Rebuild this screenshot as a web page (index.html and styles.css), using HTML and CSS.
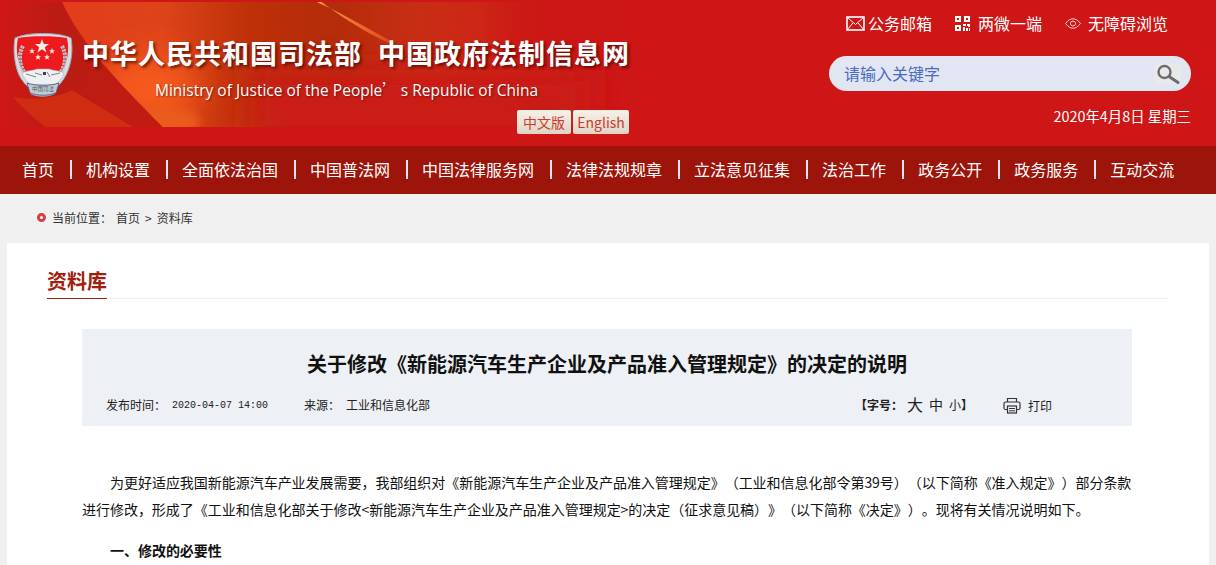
FILE: index.html
```html
<!DOCTYPE html>
<html lang="zh-CN">
<head>
<meta charset="utf-8">
<title>关于修改《新能源汽车生产企业及产品准入管理规定》的决定的说明</title>
<link rel="stylesheet" href="styles.css">
</head>
<body>
<header class="header">
  <svg class="banner" width="660" height="128" viewBox="0 0 660 128" aria-hidden="true">
    <defs>
      <linearGradient id="bgGrad" x1="0" y1="0" x2="1" y2="0">
        <stop offset="0" stop-color="#cf1716"/>
        <stop offset="0.09" stop-color="#ba1c13"/>
        <stop offset="0.25" stop-color="#c21c12"/>
        <stop offset="0.7" stop-color="#ca1714"/>
        <stop offset="1" stop-color="#ce1616"/>
      </linearGradient>
      <linearGradient id="glow" x1="0" y1="0" x2="1" y2="0">
        <stop offset="0" stop-color="#e33c1c"/>
        <stop offset="0.2" stop-color="#dd441a"/>
        <stop offset="0.38" stop-color="#bd3008"/>
        <stop offset="0.55" stop-color="#b42c0a"/>
        <stop offset="0.72" stop-color="#c82e14"/>
        <stop offset="0.84" stop-color="#cd2616"/>
        <stop offset="1" stop-color="#ca1714" stop-opacity="0"/>
      </linearGradient>
      <linearGradient id="fadeDown" x1="0" y1="0" x2="0" y2="1">
        <stop offset="0" stop-color="#ca1714" stop-opacity="0"/>
        <stop offset="1" stop-color="#ca1714"/>
      </linearGradient>
      <linearGradient id="streak" x1="0" y1="0" x2="1" y2="0">
        <stop offset="0" stop-color="#f6a63e"/>
        <stop offset="0.5" stop-color="#ea6a2c"/>
        <stop offset="1" stop-color="#d82c18"/>
      </linearGradient>
      <filter id="soft" x="-50%" y="-50%" width="200%" height="200%"><feGaussianBlur stdDeviation="16"/></filter>
      <filter id="softer" x="-50%" y="-50%" width="200%" height="200%"><feGaussianBlur stdDeviation="5"/></filter>
      <clipPath id="glowClip"><path d="M62 2C82 45 118 82 163 127H660V2Z"/></clipPath>
      <clipPath id="bannerClip"><rect x="0" y="2" width="660" height="125"/></clipPath>
    </defs>
    <rect x="0" y="2" width="660" height="125" fill="url(#bgGrad)"/>
    <g clip-path="url(#bannerClip)">
      <path d="M13 97C22 108 34 118 45 127H133C112 114 92 102 72 90C50 100 30 100 13 97Z" fill="#cf2c12"/>
      <g clip-path="url(#glowClip)">
        <rect x="62" y="0" width="498" height="128" fill="url(#glow)"/>
        <path d="M300 128H560V60C470 40 420 50 380 60C340 75 310 100 270 128Z" fill="url(#fadeDown)" filter="url(#softer)"/>
        <rect x="250" y="70" width="340" height="70" fill="#ca1a14" filter="url(#soft)"/>
        <ellipse cx="150" cy="88" rx="48" ry="34" fill="#f65a1c" filter="url(#soft)"/>
        <ellipse cx="168" cy="122" rx="32" ry="14" fill="#ea5c1c" filter="url(#softer)"/>
      </g>
      <path d="M312 0C345 14 380 36 412 52C380 42 345 20 319 0Z" fill="url(#streak)"/>
    </g>
  </svg>
  <div class="brand">
    <svg class="emblem" width="60" height="64" viewBox="0 0 60 64" aria-hidden="true">
      <path d="M29.500 .5C40 .5 50 1.500 58 5C60 16 59 30 53 42C50 48 46 52 43 55L41 61C33 64 26 64 18 61L16 55C13 52 9 48 6 42C1 30 0 16 2 5C10 1.500 20 .5 29.500 .5Z" fill="#d9dde1" stroke="#9aa6b4"/>
      <path d="M5 5C15 2.500 43 2.500 54 5C57 18 54 32 47 41L36 37H23L12 41C5 32 2 18 5 5Z" fill="#ee1a1e"/>
      <polygon points="29,6 30.800,11 36,11 31.800,14.200 33.400,19.500 29,16.300 24.600,19.500 26.200,14.200 22,11 27.200,11" fill="#f5efe8"/>
      <polygon points="19,15 19.800,17.200 22,17.200 20.300,18.600 20.900,20.800 19,19.500 17.100,20.800 17.700,18.600 16,17.200 18.200,17.200" fill="#f5efe8"/>
      <polygon points="39,15 39.800,17.200 42,17.200 40.300,18.600 40.900,20.800 39,19.500 37.100,20.800 37.700,18.600 36,17.200 38.200,17.200" fill="#f5efe8"/>
      <polygon points="25,21 25.800,23.200 28,23.200 26.300,24.600 26.900,26.800 25,25.500 23.100,26.800 23.700,24.600 22,23.200 24.200,23.200" fill="#f5efe8"/>
      <polygon points="34,21 34.800,23.200 37,23.200 35.300,24.600 35.900,26.800 34,25.500 32.100,26.800 32.700,24.600 31,23.200 33.200,23.200" fill="#f5efe8"/>
      <path d="M10 13C5 22 6 34 14 43" fill="none" stroke="#c3c9cf" stroke-width="4" stroke-dasharray="2.500 1"/>
      <path d="M49 13C54 22 53 34 45 43" fill="none" stroke="#c3c9cf" stroke-width="4" stroke-dasharray="2.500 1"/>
      <path d="M10 13C5 22 6 34 14 43M49 13C54 22 53 34 45 43" fill="none" stroke="#8b959f" stroke-width=".8"/>
      <path d="M9 40C14 37 20 38 24 36L36 36C40 38 46 37 51 40C49 46 45 50 41 52H19C15 50 11 46 9 40Z" fill="#eef0f2" stroke="#a8b0b8" stroke-width=".6"/>
      <path d="M13 41L23 44M22 40L29 42M34 39L37 44M38 42L47 40" stroke="#7c8690" stroke-width="1"/>
      <rect x="30" y="39" width="3" height="3" fill="#3c4450"/>
      <path d="M14 50C22 53 38 53 46 50L43 60C34 63 26 63 17 60Z" fill="#c3cad2" stroke="#4b5f86" stroke-width=".9"/>
      <text class="emblem-text" x="30" y="58" text-anchor="middle">中国司法</text>
    </svg>
    <div class="brand-text">
      <h1 class="site-title"><span>中华人民共和国司法部</span><span>中国政府法制信息网</span></h1>
      <p class="site-en">Ministry of Justice of the People<span class="wide-quote">’</span> s Republic of China</p>
      <div class="lang">
        <a class="lang-btn">中文版</a>
        <a class="lang-btn lang-en">English</a>
      </div>
    </div>
  </div>
  <div class="tools">
    <div class="tool-links">
      <a class="tool">
        <svg width="19" height="15" viewBox="0 0 19 15" aria-hidden="true"><rect x="1" y="1" width="17" height="13" fill="none" stroke="#fff" stroke-width="1.600"/><path d="M1.500 1.500L9.500 8.500L17.500 1.500M1.500 13.500L7 6.800M17.500 13.500L12 6.800" fill="none" stroke="#fff" stroke-width="1"/></svg>
        <span>公务邮箱</span>
      </a>
      <a class="tool tool-qr">
        <svg width="15" height="15" viewBox="0 0 15 15" aria-hidden="true"><path d="M0 0H6V6H0ZM2 2V4H4V2ZM9 0H15V6H9ZM11 2V4H13V2ZM0 9H6V15H0ZM2 11V13H4V11ZM8 8H11V10H8ZM12 8H15V11H13V10H12ZM8 11H10V15H8ZM11 12H13V15H11ZM14 12H15V15H14Z" fill="#fff" fill-rule="evenodd"/></svg>
        <span>两微一端</span>
      </a>
      <a class="tool tool-eye">
        <svg width="16" height="11" viewBox="0 0 16 11" aria-hidden="true"><path d="M.6 5.500C3 2 5.500 .8 8 .8S13 2 15.400 5.500C13 9 10.500 10.200 8 10.200S3 9 .6 5.500Z" fill="none" stroke="#f3d3d3" stroke-width="1"/><circle cx="8" cy="5.500" r="2.500" fill="none" stroke="#f3d3d3" stroke-width="1"/></svg>
        <span>无障碍浏览</span>
      </a>
    </div>
    <div class="search">
      <span class="search-input">请输入关键字</span>
      <span class="search-btn">
        <svg width="25" height="20" viewBox="0 0 25 20" aria-hidden="true"><circle cx="9.500" cy="8" r="6" fill="none" stroke="#6c6c6c" stroke-width="2.400"/><path d="M14 12.500L23 18.500" stroke="#6c6c6c" stroke-width="3" stroke-linecap="round"/></svg>
      </span>
    </div>
    <div class="date">2020年4月8日 星期三</div>
  </div>
</header>
<nav class="nav">
  <a class="nav-item">首页</a>
  <a class="nav-item">机构设置</a>
  <a class="nav-item">全面依法治国</a>
  <a class="nav-item">中国普法网</a>
  <a class="nav-item">中国法律服务网</a>
  <a class="nav-item">法律法规规章</a>
  <a class="nav-item">立法意见征集</a>
  <a class="nav-item">法治工作</a>
  <a class="nav-item">政务公开</a>
  <a class="nav-item">政务服务</a>
  <a class="nav-item">互动交流</a>
</nav>
<div class="crumbs">
  <span class="crumb-dot"></span>
  <span class="crumb-label">当前位置：</span>
  <a>首页</a>
  <span class="crumb-sep">&gt;</span>
  <a>资料库</a>
</div>
<main class="panel">
  <div class="section-head"><h2 class="section-title">资料库</h2></div>
  <article class="article">
    <div class="article-head">
      <h3 class="article-title">关于修改《新能源汽车生产企业及产品准入管理规定》的决定的说明</h3>
      <div class="meta">
        <span class="meta-label">发布时间：</span>
        <span class="meta-date">2020-04-07 14:00</span>
        <span class="meta-label meta-source">来源：</span>
        <span class="meta-from">工业和信息化部</span>
        <span class="meta-size">
          <b>【字号：</b><span class="size-l">大</span><span class="size-m">中</span><span class="size-s">小</span><b>】</b>
        </span>
        <span class="meta-print">
          <svg width="18" height="17" viewBox="0 0 18 17" aria-hidden="true"><path d="M4.500 5V1.500H13.500V5M4.500 12.500H2.500C1.500 12.500 1 12 1 11V6.500C1 5.500 1.500 5 2.500 5H15.500C16.500 5 17 5.500 17 6.500V11C17 12 16.500 12.500 15.500 12.500H13.500" fill="none" stroke="#333" stroke-width="1.200"/><rect x="4.500" y="9" width="9" height="7" fill="none" stroke="#333" stroke-width="1.200"/><path d="M6 11.500H12M6 13.800H12" stroke="#333" stroke-width="1"/></svg>
          <span>打印</span>
        </span>
      </div>
    </div>
    <div class="article-body">
      <p class="para">为更好适应我国新能源汽车产业发展需要，我部组织对《新能源汽车生产企业及产品准入管理规定》（工业和信息化部令第39号）（以下简称《准入规定》）部分条款进行修改，形成了《工业和信息化部关于修改&lt;新能源汽车生产企业及产品准入管理规定&gt;的决定（征求意见稿）》（以下简称《决定》）。现将有关情况说明如下。</p>
      <p class="para para-head">一、修改的必要性</p>
    </div>
  </article>
</main>
</body>
</html>
```
FILE: styles.css
```css
* { box-sizing: border-box; }
html, body { margin: 0; padding: 0; }
body {
  background: #f0f0f0;
  color: #222;
  font-family: "Noto Sans CJK SC", "Liberation Sans", sans-serif;
  font-size: 14px;
  text-spacing-trim: space-all;
  font-kerning: none;
}
a { color: inherit; text-decoration: none; }
h1, h2, h3, p { margin: 0; font-weight: normal; }

.header {
  position: relative;
  height: 146px;
  background: #ce1616;
  display: flex;
  justify-content: space-between;
  overflow: hidden;
}
.banner { position: absolute; left: 0; top: 0; }
.brand {
  position: relative;
  display: flex;
  align-items: flex-start;
  padding: 30px 0 0 13px;
}
.emblem { flex: none; margin-top: 3px; }
.emblem-text { fill: #4d5560; font-size: 5.500px; }
.brand-text { margin-left: 9px; width: 547px; }
.site-title {
  display: flex;
  gap: 16px;
  margin-top: 4px;
  color: #fff;
  font-size: 27px;
  line-height: 38px;
  font-weight: 700;
  letter-spacing: 1px;
  white-space: nowrap;
  text-shadow: 2px 2px 3px rgba(70, 10, 0, .75);
}
.site-en {
  margin: 5px 0 0 73px;
  color: #fff;
  font-family: "Open Sans", "Noto Sans", sans-serif;
  font-size: 15.500px;
  line-height: 24px;
  white-space: nowrap;
  text-shadow: 1px 1px 2px rgba(70, 10, 0, .6);
}
.wide-quote { font-family: "Noto Sans CJK SC", sans-serif; margin-right: -1px; }
.lang {
  display: flex;
  justify-content: flex-end;
  gap: 2px;
  margin-top: 8px;
}
.lang-btn {
  height: 24px;
  width: 54px;
  border-radius: 2px;
  background: linear-gradient(#f6f1e9, #dfd5c5);
  color: #cb3b2d;
  font-size: 14px;
  line-height: 24px;
  text-align: center;
}
.lang-en { width: 56px; }

.tools {
  position: relative;
  width: 387px;
  padding: 11px 25px 0 0;
  color: #fff;
}
.tool-links {
  display: flex;
  height: 24px;
  padding-left: 17px;
  font-size: 16px;
  line-height: 24px;
}
.tool { display: flex; align-items: center; white-space: nowrap; }
.tool svg { margin-right: 3px; }
.tool-qr { margin-left: 23px; }
.tool-qr svg { margin-right: 8px; }
.tool-eye { margin-left: 23px; }
.tool-eye svg { margin-right: 7px; }

.search {
  display: flex;
  align-items: center;
  justify-content: space-between;
  height: 35px;
  margin-top: 21px;
  padding: 0 10px 0 15px;
  border-radius: 18px;
  background: #e1e6f2;
}
.search-input { padding-bottom: 2px; color: #4a6bc0; font-size: 16px; }
.search-btn {
  display: flex;
  width: 27px;
  height: 20px;
  align-items: center;
  justify-content: center;
  background: #e9e9e9;
}
.date {
  margin-top: 14px;
  font-size: 14.400px;
  line-height: 22px;
  text-align: right;
}

.nav {
  display: flex;
  align-items: center;
  height: 48px;
  padding: 0 0 1px 6px;
  background: #9c140a;
}
.nav-item {
  padding: 0 16px;
  color: #fff;
  font-size: 16px;
  line-height: 19px;
  border-right: 2px solid #e1e6f2;
  margin-right: -2px;
  white-space: nowrap;
}
.nav-item:last-child { border-right: 0; }

.crumbs {
  display: flex;
  align-items: center;
  height: 49px;
  padding: 0 0 2px 37px;
  color: #333;
  font-size: 12px;
}
.crumb-dot {
  width: 9px;
  height: 9px;
  margin-right: 6px;
  border: 3px solid #d2403f;
  border-radius: 50%;
  background: #fff;
}
.crumb-label { margin-right: 4px; }
.crumb-sep { margin: 0 5px; }

.panel {
  margin: 0 7px;
  padding: 24px 40px 30px;
  background: #fff;
}
.section-head {
  height: 32px;
  margin-right: 1px;
  border-bottom: 1px solid #eee;
}
.section-title {
  display: inline-block;
  height: 32px;
  color: #a0200f;
  font-size: 20px;
  font-weight: 700;
  line-height: 28px;
  border-bottom: 1px solid #a0200f;
}
.article { margin: 30px 37px 0 35px; }
.article-head {
  height: 97px;
  padding: 20px 24px 0;
  background: #edf0f5;
}
.article-title {
  color: #111;
  font-size: 20px;
  font-weight: 700;
  line-height: 30px;
  text-align: center;
}
.meta {
  display: flex;
  align-items: center;
  height: 24px;
  margin-top: 13px;
  color: #222;
  font-size: 12px;
}
.meta-date {
  margin-left: 6px;
  padding-top: 2px;
  font-family: "Liberation Mono", monospace;
  font-size: 10px;
}
.meta-source { margin-left: 36px; }
.meta-from { margin-left: 6px; }
.meta-size {
  display: flex;
  align-items: center;
  margin-left: auto;
  margin-right: 30px;
}
.size-l { margin-left: 4px; font-size: 16px; }
.size-m { margin-left: 6px; font-size: 14px; }
.size-s { margin-left: 6px; font-size: 12px; }
.meta-print { display: flex; align-items: center; gap: 7px; padding-top: 2px; margin-right: 56px; }

.article-body { padding-top: 43px; }
.para {
  color: #111;
  font-size: 14px;
  line-height: 27px;
  text-indent: 28px;
  letter-spacing: -.03px;
}
.para-head { margin-top: 14px; font-weight: 700; }
```
